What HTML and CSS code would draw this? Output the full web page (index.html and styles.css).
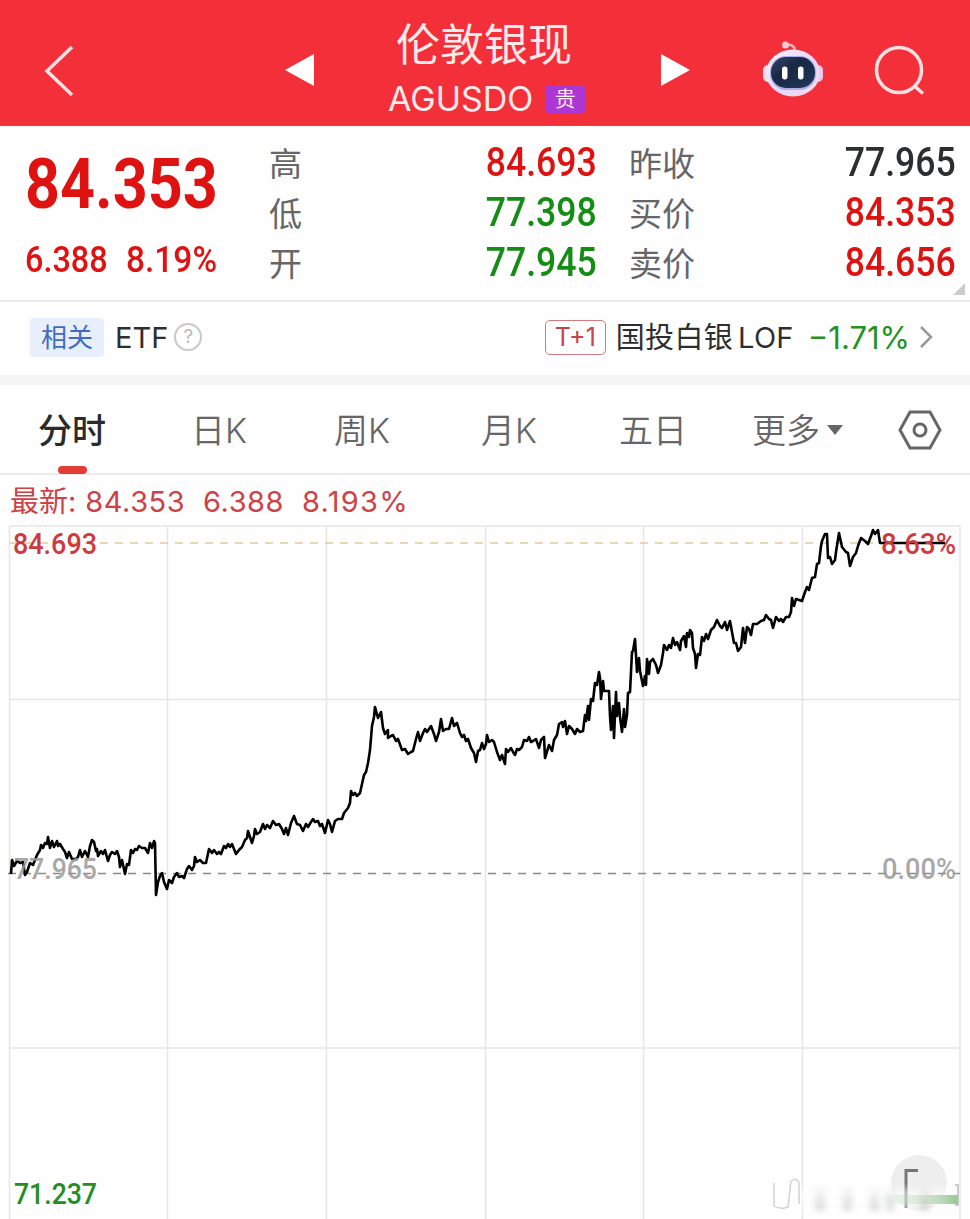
FILE: index.html
```html
<!DOCTYPE html>
<html lang="zh-CN">
<head>
    <meta charset="UTF-8">
    <title>伦敦银现</title>
    <link rel="stylesheet" href="styles.css">
</head>
<body>

<div class="header">
    <svg class="back" width="30" height="52" viewBox="0 0 30 52"><path d="M28 2L3 26L28 50"/></svg>
    <svg class="prev" width="30" height="32" viewBox="0 0 30 32"><path d="M0 16L29 0V32Z"/></svg>
    <div class="title">
        <h1>伦敦银现</h1>
        <div class="code"><span>AGUSDO</span><i>贵</i></div>
    </div>
    <svg class="next" width="30" height="32" viewBox="0 0 30 32"><path d="M29 16L0 0V32Z"/></svg>
    <svg class="robot" width="62" height="58" viewBox="0 0 62 58">
        <defs>
            <linearGradient id="head" x1="0" y1="0" x2="1" y2="1">
                <stop offset="0" stop-color="#fff1f6"/>
                <stop offset=".55" stop-color="#e3d8fa"/>
                <stop offset="1" stop-color="#fbd9e6"/>
            </linearGradient>
            <linearGradient id="face" x1="0" y1="0" x2="1" y2="1">
                <stop offset="0" stop-color="#35486c"/>
                <stop offset=".4" stop-color="#182742"/>
                <stop offset="1" stop-color="#24395e"/>
            </linearGradient>
        </defs>
        <path d="M24 5C29 4 33 6 33 11" fill="none" stroke="#ffb4bd" stroke-width="2.5"/>
        <circle cx="23.500" cy="5" r="3.500" fill="#ffcbd2"/>
        <rect x="1" y="25" width="10" height="17" rx="5" fill="#f8dcea"/>
        <rect x="51" y="25" width="10" height="17" rx="5" fill="#e9c6ea"/>
        <ellipse cx="31" cy="33" rx="27" ry="23.500" fill="url(#head)"/>
        <rect x="8" y="16" width="46" height="34" rx="16" fill="#a9afe8"/>
        <rect x="9" y="17" width="44" height="31" rx="15" fill="url(#face)"/>
        <rect x="20" y="26.500" width="5.500" height="13" rx="2.700" fill="#fff"/>
        <rect x="36" y="26.500" width="5.500" height="13" rx="2.700" fill="#fff"/>
    </svg>
    <svg class="search" width="52" height="52" viewBox="0 0 52 52"><circle cx="25" cy="25" r="22.500"/><path d="M40.500 41L49 48.500"/></svg>
</div>

<div class="quote">
    <div class="now red">
        <div class="price"><b>84.353</b></div>
        <div class="change"><b>6.388</b><b>8.19%</b></div>
    </div>
    <ul class="col1">
        <li><span>高</span><b class="red">84.693</b></li>
        <li><span>低</span><b class="green">77.398</b></li>
        <li><span>开</span><b class="green">77.945</b></li>
    </ul>
    <ul class="col2">
        <li><span>昨收</span><b>77.965</b></li>
        <li><span>买价</span><b class="red">84.353</b></li>
        <li><span>卖价</span><b class="red">84.656</b></li>
    </ul>
    <div class="corner"></div>
</div>

<div class="related">
    <span class="tag">相关</span>
    <span class="etf">ETF</span>
    <span class="help">?</span>
    <span class="t1">T+1</span>
    <span class="fund">国投白银<em>LOF</em></span>
    <span class="fall">−1.71%</span>
    <svg width="14" height="24" viewBox="0 0 14 24"><path d="M2 2L12 12L2 22"/></svg>
</div>

<div class="tabs">
    <span class="on">分时</span>
    <span>日K</span>
    <span>周K</span>
    <span>月K</span>
    <span>五日</span>
    <span class="more">更多<i></i></span>
    <svg width="44" height="40" viewBox="0 0 44 40"><path d="M12 2H32L42 20L32 38H12L2 20Z"/><circle cx="22" cy="20" r="6"/></svg>
</div>

<div class="latest"><span>最新:</span><span>84.353</span><span>6.388</span><span>8.193%</span></div>

<svg class="chart" width="970" height="697" viewBox="0 522 970 697">
    <defs>
        <filter id="soft" x="-20%" y="-20%" width="140%" height="140%"><feGaussianBlur stdDeviation="3"/></filter>
        <linearGradient id="fade" x1="0" y1="0" x2="0" y2="1">
            <stop offset="0" stop-color="#bbb" stop-opacity="0"/>
            <stop offset="1" stop-color="#aaa" stop-opacity=".5"/>
        </linearGradient>
        <linearGradient id="leaf" x1="0" y1="0" x2="1" y2="0">
            <stop offset="0" stop-color="#9fd69f" stop-opacity="0"/>
            <stop offset=".5" stop-color="#b5d8b5" stop-opacity=".4"/>
            <stop offset="1" stop-color="#93c793"/>
        </linearGradient>
    </defs>
    <path class="grid" d="M9.500 526H960.500M9.500 699.500H960.500M9.500 1048H960.500M9.500 526V1219M167.500 526V1219M326.500 526V1219M485.500 526V1219M643.500 526V1219M802.500 526V1219M960 526V1219"/>
    <path class="top" d="M10 543H880"/>
    <path class="zero" d="M8 873.500H960"/>
    <polyline class="line" points="11,874 12,860 14,866 17,861 20,863 23,862 25,875 27,872 30,863 33,865 37,855 40,850 41,845 43,848 45,843 47,844 48,837 50,848 52,841 54,847 57,841 58,846 60,844 63,849 65,852 67,858 69,852 72,859 76,859 78,857 80,850 82,857 85,851 88,857 90,846 92,840 94,842 96,851 97,849 98,856 101,851 103,854 105,850 108,861 110,855 112,852 115,854 117,851 119,857 120,867 122,860 125,874 127,864 129,865 131,850 133,853 135,849 137,850 139,846 142,848 145,848 148,853 150,843 152,848 154,841 155,843 156,895 158,882 160,876 162,873 164,882 167,889 169,880 172,883 174,877 177,873 179,877 182,876 184,878 187,869 189,866 192,870 194,866 195,857 197,862 200,860 203,863 206,863 209,849 212,853 214,850 217,854 219,852 221,854 224,846 226,848 228,844 230,847 232,844 236,854 239,850 242,847 245,840 247,838 248,831 252,843 254,836 255,829 257,834 260,832 263,824 265,829 267,825 270,828 273,821 276,825 279,824 282,829 284,834 286,828 288,835 291,823 294,816 297,824 300,825 303,831 306,824 308,827 311,822 313,819 315,822 318,821 320,826 322,824 325,833 328,820 330,824 332,832 335,821 338,819 342,819 344,813 348,808 350,803 351,791 353,795 355,793 357,796 360,793 362,784 364,775 366,772 368,763 370,750 372,726 374,717 375,707 378,718 381,712 383,728 385,734 388,730 388,738 391,736 393,735 396,741 398,739 402,750 405,749 408,754 411,752 413,751 416,739 418,732 420,741 423,733 425,729 427,732 431,726 434,734 436,741 439,732 441,719 443,731 446,729 449,729 452,718 454,726 457,723 460,733 462,737 464,735 466,741 468,739 471,748 474,753 476,762 478,751 480,750 482,743 484,749 486,744 487,735 489,742 492,740 494,742 497,752 500,760 502,755 505,764 506,749 508,752 511,748 513,752 515,755 517,749 519,750 522,747 524,740 527,741 529,737 531,742 533,741 536,739 539,748 541,740 544,737 545,758 549,745 552,751 554,740 557,735 559,724 562,722 563,727 565,721 567,734 569,726 572,729 575,734 577,729 580,732 583,731 585,715 586,721 588,706 589,720 591,699 593,701 595,683 597,685 599,672 600,678 601,699 603,681 604,691 609,691 610,716 611,730 613,706 614,738 616,692 617,716 619,703 620,717 622,732 624,709 625,727 627,715 628,693 630,692 632,652 633,651 635,639 637,672 639,658 640,671 643,686 645,676 646,685 647,659 649,674 650,662 653,659 656,665 658,673 661,665 663,653 664,645 667,650 669,645 671,648 673,638 675,645 677,642 680,650 681,641 684,636 686,647 687,633 689,637 690,630 692,633 693,648 695,654 696,668 698,654 700,655 702,637 704,641 706,634 708,639 711,630 714,627 717,620 720,626 722,628 725,622 727,630 730,621 732,632 734,643 736,643 738,651 741,647 743,628 745,643 747,627 749,629 751,635 753,624 757,624 761,621 764,620 766,615 769,619 771,620 773,628 776,617 779,621 781,619 783,622 786,617 789,617 791,612 792,598 794,606 796,599 799,600 802,601 805,592 807,587 809,590 812,578 815,577 817,564 819,563 821,546 822,541 825,534 827,534 828,558 830,557 832,564 835,560 836,552 839,533 842,547 846,552 848,553 850,566 853,557 856,553 858,546 861,538 865,541 868,544 871,536 873,530 875,534 878,530 880,543 945,543"/>
    <text x="13" y="554" class="num up" textLength="84" lengthAdjust="spacingAndGlyphs">84.693</text>
    <text x="881" y="554" class="num up" textLength="75" lengthAdjust="spacingAndGlyphs">8.63%</text>
    <text x="14" y="879" class="num flat" textLength="83" lengthAdjust="spacingAndGlyphs">77.965</text>
    <text x="882" y="879" class="num flat" textLength="74" lengthAdjust="spacingAndGlyphs">0.00%</text>
    <text x="14" y="1204" class="num down" textLength="83" lengthAdjust="spacingAndGlyphs">71.237</text>
    <!-- floating button with the faded strip under it -->
    <circle cx="919" cy="1183" r="28" fill="#eee"/>
    <path d="M906 1208V1170.500H918" fill="none" stroke="#777" stroke-width="3"/>
    <rect x="780" y="1188" width="170" height="20" fill="#fff" opacity=".5" filter="url(#soft)"/>
    <g fill="url(#fade)" filter="url(#soft)">
        <rect x="815" y="1184" width="10" height="26"/>
        <rect x="843" y="1184" width="9" height="26"/>
        <rect x="870" y="1184" width="9" height="26"/>
        <rect x="886" y="1184" width="8" height="26"/>
        <rect x="920" y="1184" width="9" height="26"/>
    </g>
    <path d="M774 1183V1206Q780 1210 788 1207L791 1181Q797 1177 799 1183V1204" fill="none" stroke="#d2d2d2" stroke-width="1.500"/>
    <rect x="880" y="1195" width="78" height="9" fill="url(#leaf)"/>
    <path d="M955 1185H958V1205H955" fill="none" stroke="#bbb" stroke-width="1.500"/>
</svg>

</body>
</html>
```
FILE: styles.css
```css
*{
    margin: 0;
    padding: 0;
    box-sizing: border-box;
}
body{
    width: 970px;
    height: 1219px;
    overflow: hidden;
    background: #fefefe;
    color: #2d2e30;
    font-family: Inter, "Noto Sans CJK SC", sans-serif;
}
ul{
    list-style: none;
}
i,em{
    font-style: normal;
}
svg{
    display: block;
    flex: none;
}
.red{
    color: #df1212;
}
.green{
    color: #138d13;
}

/* header */
.header{
    display: flex;
    height: 126px;
    padding-top: 20px;
    background: #f32f39;
    border-bottom: 1px solid #d04a50;
    color: #ffe9ea;
}
.header path{
    fill: #fff;
}
.header .back{
    margin: 25px 0 0 44px;
}
.header .back path,
.header .search,
.header .search path{
    fill: none;
    stroke: #ffe0e2;
    stroke-width: 3.5;
}
.header .prev{
    margin: 34px 0 0 211px;
}
.title{
    width: 200px;
    margin-left: 69px;
    text-align: center;
}
.title h1{
    height: 50px;
    line-height: 51px;
    font-size: 44px;
    font-weight: 400;
}
.code{
    display: flex;
    align-items: center;
    height: 58px;
    padding-left: 4px;
    font-size: 34px;
    line-height: 58px;
}
.code i{
    flex: none;
    width: 40px;
    height: 28px;
    margin-left: 12px;
    border-radius: 4px;
    background: #ad37d5;
    font-size: 21px;
    line-height: 27px;
}
.header .next{
    margin: 34px 0 0 77px;
}
.header .robot{
    margin: 20px 0 0 71px;
}
.header .robot path{
    fill: none;
}
.header .search{
    margin: 25px 0 0 50px;
}

/* quote */
.quote{
    display: flex;
    position: relative;
    height: 176px;
    padding-top: 12px;
    border-bottom: 2px solid #ececec;
}
.quote b{
    display: inline-block;
    font-family: Roboto, sans-serif;
    font-weight: 500;
}
.now{
    width: 269px;
    padding-left: 25px;
}
.price{
    height: 92px;
    line-height: 89px;
    font-size: 70px;
}
.price b{
    font-weight: 700;
    transform: scaleX(.872);
    transform-origin: left;
}
.change{
    display: flex;
    height: 60px;
    line-height: 60px;
    font-size: 36px;
}
.change b{
    width: 101px;
    transform: scaleX(.9);
    transform-origin: left;
}
.change b:last-child{
    transform: scaleX(.93);
}
.quote li{
    display: flex;
    justify-content: space-between;
    height: 50px;
    line-height: 52px;
    font-size: 33px;
}
.quote li span{
    color: #666;
}
.quote li b{
    font-size: 40px;
    line-height: 49px;
    transform: scaleX(.89);
    transform-origin: right;
}
.col1{
    width: 328px;
}
.col2{
    width: 327px;
    margin-left: 32px;
}
.corner{
    position: absolute;
    right: 5px;
    bottom: 5px;
    border-left: 12px solid transparent;
    border-bottom: 12px solid #ccc;
}

/* related */
.related{
    display: flex;
    align-items: center;
    height: 83px;
    padding: 0 37px 3px 30px;
    border-bottom: 10px solid #f5f5f5;
    font-size: 29px;
    white-space: nowrap;
}
.tag{
    width: 74px;
    height: 39px;
    border-radius: 4px;
    background: #e7eefc;
    color: #416bc0;
    font-size: 26px;
    line-height: 39px;
    text-align: center;
}
.etf{
    margin-left: 11px;
}
.help{
    width: 28px;
    height: 28px;
    margin-left: 6px;
    border: 2px solid #c8c8c8;
    border-radius: 50%;
    color: #bbb;
    font-size: 19px;
    line-height: 24px;
    text-align: center;
}
.t1{
    width: 61px;
    height: 35px;
    margin-left: auto;
    border: 1.5px solid #d07c82;
    border-radius: 5px;
    color: #cb4248;
    font-size: 25px;
    line-height: 33px;
    text-align: center;
}
.fund{
    display: flex;
    align-items: baseline;
    margin: -4px 0 0 10px;
    letter-spacing: .3px;
}
.fund em{
    margin-left: 5px;
}
.fall{
    margin-left: 14px;
    color: #229322;
    font-size: 31px;
}
.related svg{
    margin-left: 9px;
    fill: none;
    stroke: #999;
    stroke-width: 2.5;
}

/* tabs */
.tabs{
    display: grid;
    grid-template-columns: 153px 143px 147px 138px 133px 148px 44px;
    height: 90px;
    padding-left: 38px;
    border-bottom: 2px solid #ebebeb;
    color: #666;
    font-size: 34px;
    font-weight: 350;
    line-height: 92px;
}
.tabs .on{
    position: relative;
    color: #2b2b2b;
    font-weight: 500;
}
.tabs .on:after{
    content: "";
    position: absolute;
    left: 20px;
    top: 81px;
    width: 29px;
    height: 8px;
    border-radius: 4px;
    background: #e23d35;
}
.more{
    display: flex;
    align-items: center;
}
.more i{
    margin: -3px 0 0 7px;
    border: 8px solid transparent;
    border-top: 10px solid #666;
    border-bottom: 0;
}
.tabs svg{
    margin: 25px 0 0 -2px;
    fill: none;
    stroke: #666;
    stroke-width: 3;
}

/* chart */
.latest{
    display: flex;
    height: 47px;
    padding-left: 10px;
    color: #cd4147;
    font-size: 29px;
    line-height: 53px;
    letter-spacing: .5px;
}
.latest span{
    margin-right: 18px;
}
.latest span:first-child{
    margin-right: 9px;
    letter-spacing: 0;
}
.latest span:last-child{
    letter-spacing: 1.3px;
}
.grid{
    fill: none;
    stroke: #e6e6e6;
    stroke-width: 1.5;
}
.top{
    stroke: #dccba0;
    stroke-width: 1.5;
    stroke-dasharray: 8 7;
}
.zero{
    stroke: #8a8a8a;
    stroke-width: 1.5;
    stroke-dasharray: 8 7;
}
.line{
    fill: none;
    stroke: #000;
    stroke-width: 2.6;
    stroke-linejoin: round;
}
.num{
    font: 500 30px Roboto, sans-serif;
}
.up{
    fill: #cf3940;
}
.flat{
    fill: #999;
    fill-opacity: .85;
}
.down{
    fill: #238f23;
}
```
